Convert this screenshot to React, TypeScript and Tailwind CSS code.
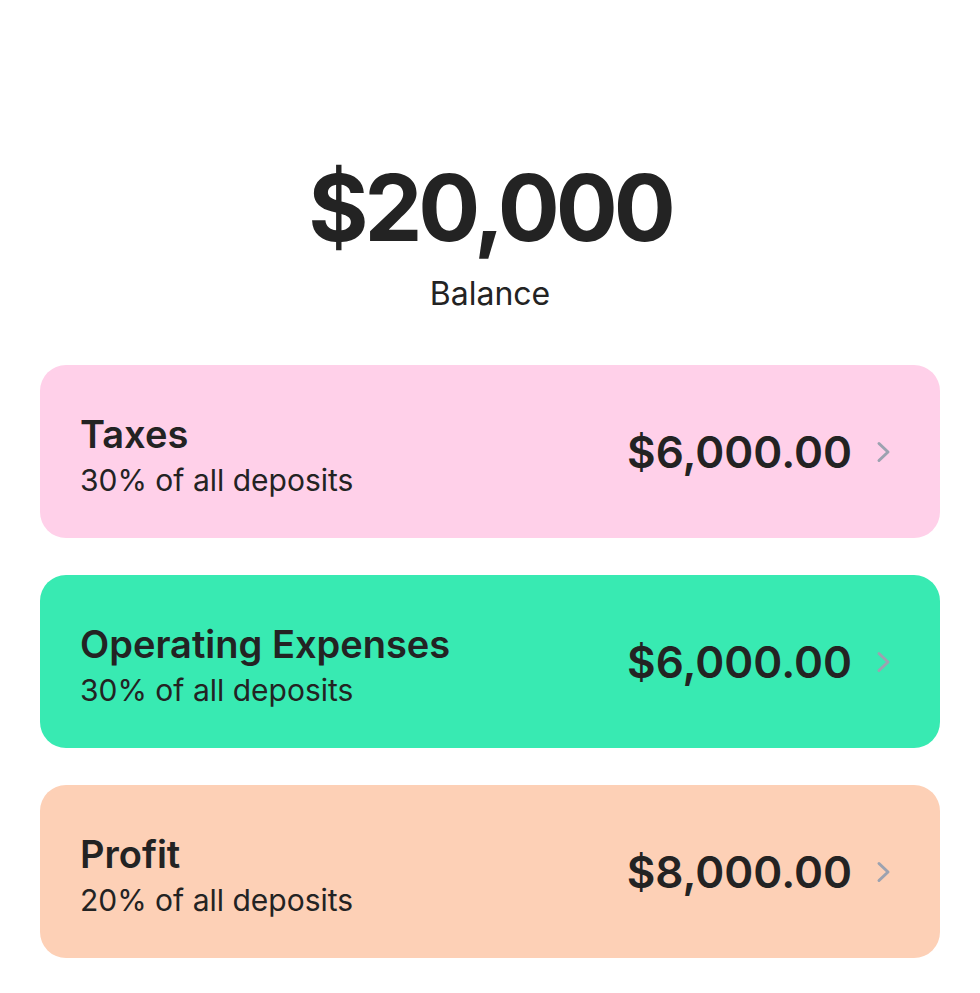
import React from 'react';

type Bucket = {
  name: string;
  note: string;
  amount: string;
  bg: string;
};

const buckets: Bucket[] = [
  { name: 'Taxes', note: '30% of all deposits', amount: '$6,000.00', bg: 'bg-[#ffd0e9]' },
  { name: 'Operating Expenses', note: '30% of all deposits', amount: '$6,000.00', bg: 'bg-[#38eab2]' },
  { name: 'Profit', note: '20% of all deposits', amount: '$8,000.00', bg: 'bg-[#fdd0b6]' },
];

const Chevron = () => (
  <svg width="16" height="24" viewBox="0 0 16 24" fill="none" className="shrink-0">
    <path d="M3 3.5L12 12L3 20.5" stroke="#9ca2b0" strokeWidth="3" strokeLinecap="round" strokeLinejoin="round" />
  </svg>
);

const App = () => {
  return (
    <div className="min-h-screen w-full bg-white text-[#232323] font-['Inter',sans-serif]">
      <div className="pt-[158px] flex flex-col items-center">
        <h1 className="text-[92px] leading-[100px] font-bold tracking-[-4px]">$20,000</h1>
        <p className="mt-4 text-[32px] leading-[40px]">Balance</p>
      </div>

      <div className="mt-[51px] px-10 flex flex-col gap-[37px]">
        {buckets.map((b) => (
          <div
            key={b.name}
            className={`${b.bg} h-[173px] rounded-[26px] pl-10 pr-[48px] flex items-center justify-between`}
          >
            <div className="flex flex-col pt-[10px]">
              <span className="text-[38px] leading-[46px] font-semibold">{b.name}</span>
              <span className="text-[30px] leading-[46px]">{b.note}</span>
            </div>
            <div className="flex items-center gap-[24px]">
              <span className="text-[44px] leading-[52px] font-semibold">{b.amount}</span>
              <Chevron />
            </div>
          </div>
        ))}
      </div>
    </div>
  );
};

export default App;
